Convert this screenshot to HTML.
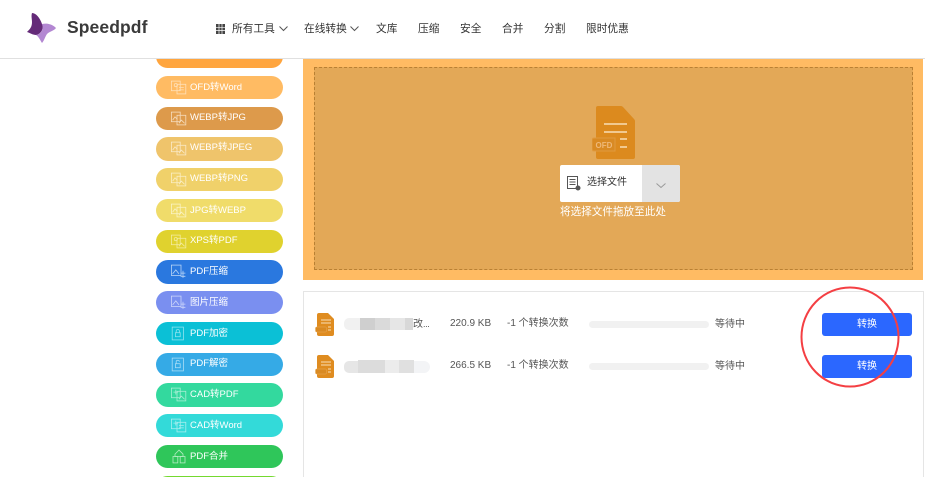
<!DOCTYPE html>
<html lang="zh"><head><meta charset="utf-8"><title>Speedpdf</title>
<style>
html,body{margin:0;padding:0;background:#fff;overflow:hidden;width:925px;height:477px}
#page{position:relative;width:925px;height:477px;overflow:hidden;font-family:"Liberation Sans","Noto Sans CJK SC",sans-serif;color:#333}
.a{position:absolute;white-space:nowrap}
#hd{position:absolute;left:0;top:0;width:925px;box-sizing:border-box;height:59px;background:#fff;border-bottom:1px solid #e0e0e0;z-index:3}
.nav{font-size:10.7px;line-height:16px;top:21px;color:#333}
.pill{position:absolute;left:156px;width:127px;height:23px;border-radius:12px;color:#fff;font-size:9.5px;line-height:23px;overflow:hidden}
.pill span{position:absolute;left:34px;top:0;white-space:nowrap}
.pill svg{position:absolute;left:15px;top:4px;width:16px;height:15px}
.t{font-size:10px;line-height:14px;color:#555}
.btn{position:absolute;left:822px;width:90px;height:23px;background:#2b67ff;border-radius:3px;color:#fff;font-size:10px;line-height:24px;text-align:center}
.bar{position:absolute;left:589px;width:120px;height:7px;border-radius:4px;background:#f1f1f1}
</style></head><body>
<div id="page">
<div id="hd">
<svg class="a" style="left:0;top:0" width="60" height="50" viewBox="0 0 60 50">
<path d="M42 24C47 23 52 24 56 28C54 31 50 31 47 34C45 37 44 41 42 43C40 40 39 37 36 35C41 34 44 30 42 24Z" fill="#b387d2"/>
<path d="M32 13C36 13 40 18 42 24C44 29 41 34 36 35C33 35 30 33 27 32C30 29 32 27 32 22C32 19 31 16 32 13Z" fill="#642a78"/>
</svg>
<div class="a" style="left:67px;top:17px;font-size:17.5px;line-height:20px;font-weight:bold;color:#3a3a3a;letter-spacing:.1px">Speedpdf</div>
<svg class="a" style="left:216px;top:24px" width="9" height="10"><path d="M0 0h9v10H0z" fill="#444"/><path d="M3 0v10M6 0v10M0 3.300h9M0 6.600h9" stroke="#fff" stroke-width=".7"/></svg>
<div class="a nav" style="left:232px">所有工具</div>
<svg class="a" style="left:279px;top:26px" width="9" height="6"><path d="M.5.5L4.500 4.500 8.500.5" fill="none" stroke="#555"/></svg>
<div class="a nav" style="left:304px">在线转换</div>
<svg class="a" style="left:350px;top:26px" width="9" height="6"><path d="M.5.5L4.500 4.500 8.500.5" fill="none" stroke="#555"/></svg>
<div class="a nav" style="left:376px">文库</div>
<div class="a nav" style="left:418px">压缩</div>
<div class="a nav" style="left:460px">安全</div>
<div class="a nav" style="left:502px">合并</div>
<div class="a nav" style="left:544px">分割</div>
<div class="a nav" style="left:586px">限时优惠</div>
</div>

<div class="pill" style="top:45px;background:#ffa53e"></div>
<div class="pill" style="top:76px;background:#ffbb63"><svg viewBox="0 0 20 18" fill="none" stroke="#ffe0b8"><rect x=".5" y="1" width="11" height="12"/><rect x="7.500" y="5" width="11" height="12"/><circle cx="6" cy="6" r="2"/><path d="M10 9h6M10 12h6"/></svg><span>OFD转Word</span></div>
<div class="pill" style="top:107px;background:#dd9a4b"><svg viewBox="0 0 20 18" fill="none" stroke="#f6ddbd"><rect x=".5" y="1" width="11" height="12"/><rect x="7.500" y="5" width="11" height="12"/><path d="M2 11l3-4 3 3M10 15l3-4 4 4"/></svg><span style="top:-1px">WEBP转JPG</span></div>
<div class="pill" style="top:137px;height:24px;background:#efc46b"><svg viewBox="0 0 20 18" fill="none" stroke="#fae9c6"><rect x=".5" y="1" width="11" height="12"/><rect x="7.500" y="5" width="11" height="12"/><path d="M2 11l3-4 3 3M10 15l3-4 4 4"/></svg><span style="top:-1px">WEBP转JPEG</span></div>
<div class="pill" style="top:168px;background:#f0d16a"><svg viewBox="0 0 20 18" fill="none" stroke="#faeec4"><rect x=".5" y="1" width="11" height="12"/><rect x="7.500" y="5" width="11" height="12"/><path d="M2 11l3-4 3 3M10 15l3-4 4 4"/></svg><span style="top:-1px">WEBP转PNG</span></div>
<div class="pill" style="top:199px;background:#f0dc6a"><svg viewBox="0 0 20 18" fill="none" stroke="#faf3c4"><rect x=".5" y="1" width="11" height="12"/><rect x="7.500" y="5" width="11" height="12"/><path d="M2 11l3-4 3 3M10 15l3-4 4 4"/></svg><span>JPG转WEBP</span></div>
<div class="pill" style="top:230px;background:#e0d22e"><svg viewBox="0 0 20 18" fill="none" stroke="#f3ec9e"><rect x=".5" y="1" width="11" height="12"/><rect x="7.500" y="5" width="11" height="12"/><circle cx="6" cy="6" r="2"/><path d="M10 15l3-4 4 4"/></svg><span style="top:-1px">XPS转PDF</span></div>
<div class="pill" style="top:260px;height:24px;background:#2a78df"><svg viewBox="0 0 20 18" fill="none" stroke="#b8d4f6"><rect x=".5" y="1" width="12" height="13"/><path d="M2 12l4-5 4 5M15 8v9M12 11h6M12 15h6"/></svg><span>PDF压缩</span></div>
<div class="pill" style="top:291px;background:#7a8ff0"><svg viewBox="0 0 20 18" fill="none" stroke="#ccd5fa"><rect x=".5" y="1" width="12" height="13"/><path d="M2 12l4-5 4 5M15 8v9M12 11h6M12 15h6"/></svg><span>图片压缩</span></div>
<div class="pill" style="top:322px;background:#0bc0d6"><svg viewBox="0 0 20 18" fill="none" stroke="#8ee3ee"><rect x="1.500" y="1" width="14" height="16"/><rect x="5.500" y="8" width="6" height="5"/><path d="M6.500 8V6a2 2 0 0 1 4 0v2"/></svg><span>PDF加密</span></div>
<div class="pill" style="top:353px;background:#35aae6"><svg viewBox="0 0 20 18" fill="none" stroke="#a8dcf6"><rect x="1.500" y="1" width="14" height="16"/><rect x="5.500" y="8" width="6" height="5"/><path d="M6.500 8V6a2 2 0 0 1 4-.5"/></svg><span style="top:-1px">PDF解密</span></div>
<div class="pill" style="top:383px;height:24px;background:#33d99e"><svg viewBox="0 0 20 18" fill="none" stroke="#a8eed4"><rect x=".5" y="1" width="11" height="12"/><rect x="7.500" y="5" width="11" height="12"/><path d="M6 3v6M3 6h6M10 15l3-4 4 4"/></svg><span>CAD转PDF</span></div>
<div class="pill" style="top:414px;background:#33dad9"><svg viewBox="0 0 20 18" fill="none" stroke="#a8eeee"><rect x=".5" y="1" width="11" height="12"/><rect x="7.500" y="5" width="11" height="12"/><path d="M6 3v6M3 6h6M10 9h6M10 12h6"/></svg><span>CAD转Word</span></div>
<div class="pill" style="top:445px;background:#2fc65a"><svg viewBox="0 0 20 18" fill="none" stroke="#b4ecc3"><rect x="2.500" y="9" width="6" height="8"/><rect x="11.500" y="9" width="6" height="8"/><path d="M5 6l5-5 5 5v3H5z"/></svg><span>PDF合并</span></div>
<div class="pill" style="top:476px;background:#74d92f"></div>

<div class="a" style="left:303px;top:58px;width:620px;height:222px;background:#ffbb63"></div>
<div class="a" style="left:314px;top:67px;width:599px;height:203px;box-sizing:border-box;background:#e3a857;border:1px dashed #b98033"></div>
<svg class="a" style="left:592px;top:105px" width="44" height="56" viewBox="0 0 44 56">
<path d="M6 1H29Q30 1 31 2L42 14Q43 15 43 16V52Q43 54 41 54H6Q4 54 4 52V3Q4 1 6 1Z" fill="#dc8a1e"/>
<path d="M12 19H35M12 27H35M28 34H35M28 42H35" stroke="#f8deb6" stroke-width="1.500"/>
<path d="M2 33H23V46H2Q0 46 0 44V35Q0 33 2 33Z" fill="#d98a23" stroke="#e09a3f"/>
<text x="3.500" y="43" font-size="8" font-weight="bold" fill="#eeb878" font-family="Liberation Sans">OFD</text>
</svg>
<div class="a" style="left:560px;top:165px;width:120px;height:37px;background:#fff;border-radius:2px;overflow:hidden">
<div class="a" style="left:82px;top:0;width:38px;height:37px;background:#e3e3e3"></div>
<svg class="a" style="left:6px;top:11px" width="15" height="15" fill="none" stroke="#555"><rect x="1.500" y=".5" width="10" height="12"/><path d="M3.500 3.500h6M3.500 6h6M3.500 8.500h6"/><circle cx="12" cy="12" r="2" fill="#555"/></svg>
<div class="a" style="left:27px;top:11px;font-size:10px;line-height:14px;color:#333">选择文件</div>
<svg class="a" style="left:96px;top:18px" width="10" height="6"><path d="M.5.500L5 4.500 9.500.5" fill="none" stroke="#999"/></svg>
</div>
<div class="a" style="left:560px;top:204px;font-size:10.6px;line-height:16px;color:#fff">将选择文件拖放至此处</div>

<div class="a" style="left:303px;top:291px;width:621px;height:200px;box-sizing:border-box;border:1px solid #e5e5e5"></div>

<svg class="a" style="left:315px;top:312px" width="20" height="25" viewBox="0 0 20 25"><path d="M4 1H13L19 7V22Q19 24 17 24H4Q2 24 2 22V3Q2 1 4 1Z" fill="#df8c20"/><path d="M6 8H16M6 11H16M13 15H16M13 18H16" stroke="#f8deb6"/><rect x=".5" y="15" width="11" height="5" rx="1" fill="#d98a23" stroke="#e9aa58" stroke-width=".5"/></svg>
<svg class="a" style="left:315px;top:354px" width="20" height="25" viewBox="0 0 20 25"><path d="M4 1H13L19 7V22Q19 24 17 24H4Q2 24 2 22V3Q2 1 4 1Z" fill="#df8c20"/><path d="M6 8H16M6 11H16M13 15H16M13 18H16" stroke="#f8deb6"/><rect x=".5" y="15" width="11" height="5" rx="1" fill="#d98a23" stroke="#e9aa58" stroke-width=".5"/></svg>

<div class="a" style="left:344px;top:318px;width:16px;height:12px;background:#f1f1f1;border-radius:5px 0 0 5px"></div>
<div class="a" style="left:360px;top:318px;width:15px;height:12px;background:#cfcfcf"></div>
<div class="a" style="left:375px;top:318px;width:15px;height:12px;background:#dadada"></div>
<div class="a" style="left:390px;top:318px;width:15px;height:12px;background:#e6e6e6"></div>
<div class="a" style="left:405px;top:318px;width:8px;height:12px;background:#d8d8d8"></div>
<div class="a t" style="left:413px;top:317px">改<span style="font-size:9px;letter-spacing:-.4px">...</span></div>

<div class="a" style="left:344px;top:361px;width:14px;height:12px;background:#e6e6e6;border-radius:5px 0 0 5px"></div>
<div class="a" style="left:358px;top:360px;width:27px;height:13px;background:#dcdcdc"></div>
<div class="a" style="left:385px;top:360px;width:14px;height:13px;background:#ececec"></div>
<div class="a" style="left:399px;top:360px;width:15px;height:13px;background:#e0e0e0"></div>
<div class="a" style="left:414px;top:361px;width:16px;height:12px;background:#f3f4f6;border-radius:0 6px 6px 0"></div>

<div class="a t" style="left:450px;top:317px">220.9 KB</div>
<div class="a t" style="left:450px;top:359px">266.5 KB</div>
<div class="a t" style="left:507px;top:317px">-1 个转换次数</div>
<div class="a t" style="left:507px;top:359px">-1 个转换次数</div>
<div class="bar" style="top:321px"></div>
<div class="bar" style="top:363px"></div>
<div class="a t" style="left:715px;top:318px">等待中</div>
<div class="a t" style="left:715px;top:360px">等待中</div>
<div class="btn" style="top:313px">转换</div>
<div class="btn" style="top:355px">转换</div>
<svg class="a" style="left:800px;top:286px" width="100" height="102"><ellipse cx="50" cy="51" rx="48.500" ry="49.500" fill="none" stroke="#f43f43" stroke-width="2"/></svg>
</div>
</body></html>
